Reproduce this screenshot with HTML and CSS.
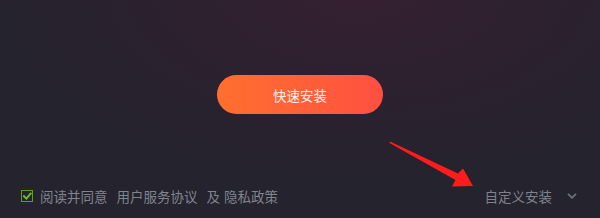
FILE: index.html
```html
<!DOCTYPE html>
<html lang="zh-CN">
<head>
<meta charset="utf-8">
<title>安装</title>
<link rel="stylesheet" href="styles.css">
</head>
<body>
<div class="stage">
  <div class="main">
    <button class="install-btn">快速安装</button>
  </div>
  <div class="footer">
    <div class="agree">
      <span class="checkbox">
        <svg width="12" height="12" viewBox="0 0 12 12"><path d="M3 6.2 L5.4 8.6 L9.6 3.6" fill="none" stroke="#6cc11a" stroke-width="2" stroke-linecap="square"/></svg>
      </span>
      <span class="t1">阅读并同意</span>
      <span class="t2">用户服务协议</span>
      <span class="t3">及</span>
      <span class="t4">隐私政策</span>
    </div>
    <div class="custom">
      <span>自定义安装</span>
      <svg class="chev" width="10" height="6" viewBox="0 0 10 6"><path d="M1 0.8 L5 4.8 L9 0.8" fill="none" stroke="#6c707b" stroke-width="1.8"/></svg>
    </div>
  </div>
  <svg class="arrow" width="600" height="218" viewBox="0 0 600 218">
    <polygon points="390,141.5 458,173.5 463,168.5 473,186 452,186.5 455.5,180 389.5,143" fill="#ff1c1c"/>
  </svg>
</div>
</body>
</html>
```

FILE: styles.css
```css
html, body {
  margin: 0;
  padding: 0;
}
body {
  width: 600px;
  height: 218px;
  overflow: hidden;
  font-family: "Noto Sans CJK SC", "Noto Sans", sans-serif;
}
.stage {
  position: relative;
  width: 600px;
  height: 218px;
  display: flex;
  flex-direction: column;
  background:
    radial-gradient(ellipse 360px 190px at 360px -10px, rgba(58, 30, 50, 0.75), rgba(58, 30, 50, 0)),
    #25232d;
}
.main {
  display: flex;
  justify-content: center;
  padding-top: 75px;
}
.install-btn {
  width: 166px;
  height: 39px;
  border: none;
  border-radius: 20px;
  background: linear-gradient(90deg, #ff6f2f 0%, #ff5f38 55%, #ff4f42 100%);
  color: #fff0ee;
  font-family: "Noto Sans CJK SC", sans-serif;
  font-size: 13.5px;
  padding: 2px 0 0 0;
  line-height: 1;
}
.footer {
  margin-top: auto;
  height: 20px;
  margin-bottom: 12px;
  padding: 0 23px 0 21px;
  display: flex;
  align-items: center;
  justify-content: space-between;
  font-size: 13.5px;
  color: #80848f;
}
.agree {
  display: flex;
  align-items: center;
}
.checkbox {
  box-sizing: border-box;
  width: 12px;
  height: 12px;
  border: 1.5px solid #5e9f16;
  display: flex;
  align-items: center;
  justify-content: center;
  margin-right: 7px;
}
.checkbox svg {
  flex: none;
}
.t2 { margin-left: 9px; }
.t3 { margin-left: 9px; }
.t4 { margin-left: 4px; }
.custom {
  display: flex;
  align-items: center;
  color: #7d828e;
}
.chev {
  margin-left: 15px;
}
.arrow {
  position: absolute;
  left: 0;
  top: 0;
  pointer-events: none;
}
```
